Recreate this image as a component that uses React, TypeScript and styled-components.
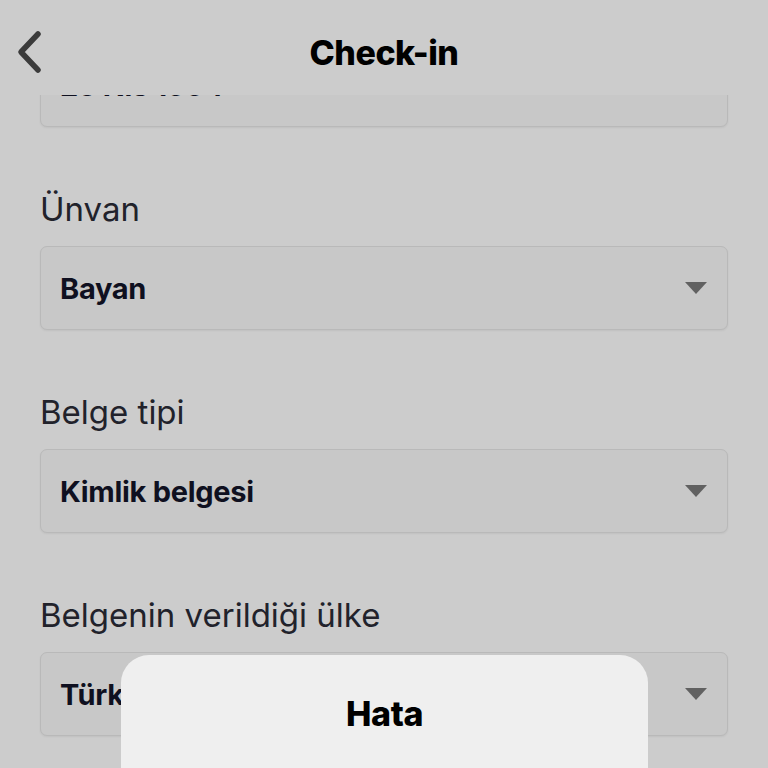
import styled, { createGlobalStyle } from 'styled-components';

const Global = createGlobalStyle`
  html, body { margin: 0; padding: 0; }
  body { font-family: Inter, "Noto Sans", Arial, sans-serif; }
`;

const Screen = styled.div`
  position: relative;
  width: 768px;
  height: 768px;
  overflow: hidden;
  background: #ffffff;
  display: flex;
  flex-direction: column;
`;

const Header = styled.header`
  position: relative;
  z-index: 2;
  box-sizing: border-box;
  height: 95px;
  padding-top: 9px;
  flex-shrink: 0;
  display: grid;
  grid-template-columns: 62px 1fr 62px;
  align-items: center;
  background: #ffffff;
`;

const BackButton = styled.button`
  border: 0;
  background: none;
  padding: 0;
  display: flex;
  justify-content: center;
  align-items: center;
  height: 44px;
`;

const Title = styled.h1`
  margin: 0;
  text-align: center;
  font-size: 34px;
  font-weight: 800;
  color: #000;
  letter-spacing: -0.5px;
`;

const Content = styled.main`
  flex: 1;
  overflow: hidden;
  padding: 0 40px;
`;

const Form = styled.div<{ $offset: number }>`
  display: flex;
  flex-direction: column;
  margin-top: ${({ $offset }) => -$offset}px;
`;

const Field = styled.div`
  display: flex;
  flex-direction: column;
  margin-bottom: 64px;
`;

const Label = styled.label`
  font-size: 33px;
  line-height: 37px;
  color: #2a2b36;
  letter-spacing: 0;
  margin-bottom: 18px;
`;

const Select = styled.div`
  box-sizing: border-box;
  height: 84px;
  display: flex;
  align-items: center;
  justify-content: space-between;
  padding: 0 20px 0 19px;
  background: #fafafa;
  border: 1px solid #e8e8e8;
  border-radius: 7px;
  box-shadow: 0 1px 2px rgba(0, 0, 0, 0.06);
`;

const Value = styled.span`
  font-size: 29px;
  font-weight: 700;
  color: #131528;
  letter-spacing: -0.3px;
`;

const Caret = styled.span`
  width: 0;
  height: 0;
  border-left: 11px solid transparent;
  border-right: 11px solid transparent;
  border-top: 12px solid #7a7a7a;
`;

const Backdrop = styled.div`
  position: absolute;
  inset: 0;
  z-index: 3;
  background: rgba(0, 0, 0, 0.2);
`;

const Alert = styled.div`
  position: absolute;
  z-index: 4;
  left: 121px;
  top: 655px;
  width: 527px;
  height: 220px;
  border-radius: 28px;
  background: #efefef;
  display: flex;
  flex-direction: column;
  align-items: center;
`;

const AlertTitle = styled.h2`
  margin: 38px 0 0;
  font-size: 34px;
  font-weight: 800;
  color: #000;
  letter-spacing: -0.4px;
`;

const fields = [
  { label: 'Doğum tarihi', value: '25 Nis 1994', select: false },
  { label: 'Ünvan', value: 'Bayan', select: true },
  { label: 'Belge tipi', value: 'Kimlik belgesi', select: true },
  { label: 'Belgenin verildiği ülke', value: 'Türkiye', select: true },
];

export default function App() {
  return (
    <>
      <Global />
      <Screen>
        <Header>
          <BackButton aria-label="Geri">
            <svg width="30" height="44" viewBox="0 0 30 44">
              <path d="M22 4 L5 22 L22 40" fill="none" stroke="#4a4a4a" strokeWidth="5.5" strokeLinecap="round" strokeLinejoin="round" />
            </svg>
          </BackButton>
          <Title>Check-in</Title>
          <span />
        </Header>
        <Content>
          <Form $offset={107}>
            {fields.map((f) => (
              <Field key={f.label}>
                <Label>{f.label}</Label>
                <Select>
                  <Value>{f.value}</Value>
                  {f.select && <Caret />}
                </Select>
              </Field>
            ))}
          </Form>
        </Content>
        <Backdrop />
        <Alert role="alertdialog">
          <AlertTitle>Hata</AlertTitle>
        </Alert>
      </Screen>
    </>
  );
}
